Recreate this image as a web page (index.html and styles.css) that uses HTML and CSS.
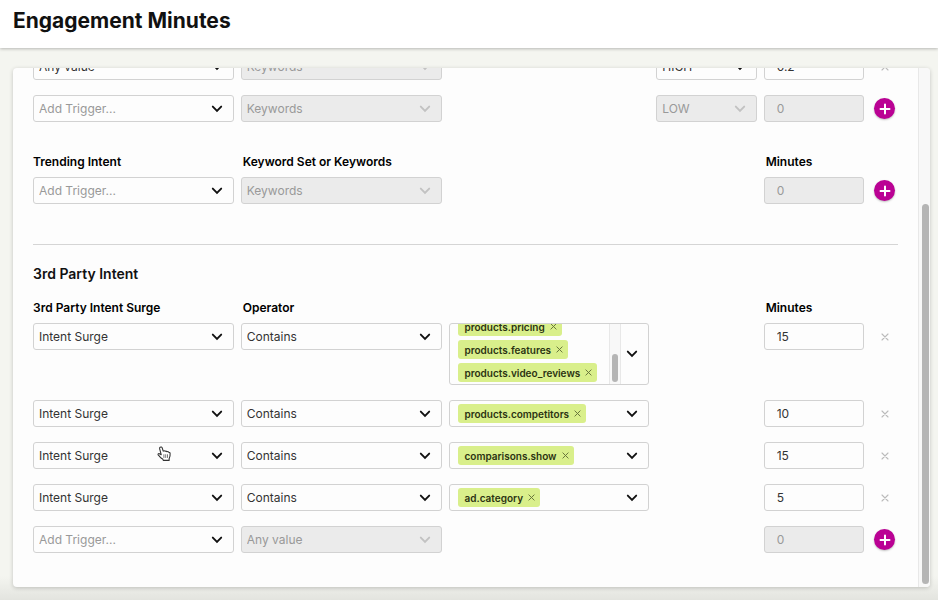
FILE: index.html
```html
<!DOCTYPE html>
<html lang="en">
<head>
<meta charset="utf-8">
<meta name="viewport" content="width=device-width, initial-scale=1">
<title>Engagement Minutes</title>
<link rel="stylesheet" href="styles.css">
</head>
<body>
<svg class="sprite" aria-hidden="true">
  <symbol id="chevron" viewBox="0 0 12 8"><path d="M1.8 1.6 6 5.8l4.200-4.200" fill="none" stroke="currentColor" stroke-width="1.900" stroke-linecap="round" stroke-linejoin="miter"/></symbol>
  <symbol id="cross" viewBox="0 0 8 8"><path d="M1 1l6 6M7 1 1 7" fill="none" stroke="currentColor" stroke-width="1.100" stroke-linecap="round"/></symbol>
  <symbol id="plus" viewBox="0 0 12 12"><path d="M6 1.500v9M1.500 6h9" fill="none" stroke="currentColor" stroke-width="2" stroke-linecap="round"/></symbol>
</svg>
<header class="page-header"><h1>Engagement Minutes</h1></header>
<main class="page">
  <div class="card">
    <form class="content">
      <section class="group">
        <div class="row">
          <div class="field"><select aria-label="Trigger"><option>Any value</option></select><svg class="chevron"><use href="#chevron"/></svg></div>
          <div class="field"><select aria-label="Keywords" disabled><option>Keywords</option></select><svg class="chevron"><use href="#chevron"/></svg></div>
          <div class="field level"><select aria-label="Level"><option>HIGH</option></select><svg class="chevron"><use href="#chevron"/></svg></div>
          <input class="minutes" type="text" aria-label="Minutes" value="0.2">
          <button class="remove" type="button" aria-label="Remove"><svg><use href="#cross"/></svg></button>
        </div>
        <div class="row">
          <div class="field"><select class="empty" aria-label="Trigger"><option>Add Trigger...</option></select><svg class="chevron"><use href="#chevron"/></svg></div>
          <div class="field"><select aria-label="Keywords" disabled><option>Keywords</option></select><svg class="chevron"><use href="#chevron"/></svg></div>
          <div class="field level"><select aria-label="Level" disabled><option>LOW</option></select><svg class="chevron"><use href="#chevron"/></svg></div>
          <input class="minutes" type="text" aria-label="Minutes" value="0" disabled>
          <button class="add" type="button" aria-label="Add"><svg><use href="#plus"/></svg></button>
        </div>
      </section>

      <section class="group trending">
        <div class="row labels">
          <label for="trend-trigger">Trending Intent</label>
          <label for="trend-keywords">Keyword Set or Keywords</label>
          <label class="minutes" for="trend-minutes">Minutes</label>
        </div>
        <div class="row">
          <div class="field"><select class="empty" id="trend-trigger"><option>Add Trigger...</option></select><svg class="chevron"><use href="#chevron"/></svg></div>
          <div class="field"><select id="trend-keywords" disabled><option>Keywords</option></select><svg class="chevron"><use href="#chevron"/></svg></div>
          <input class="minutes" id="trend-minutes" type="text" value="0" disabled>
          <button class="add" type="button" aria-label="Add"><svg><use href="#plus"/></svg></button>
        </div>
      </section>

      <hr>
      <h2>3rd Party Intent</h2>

      <section class="group">
        <div class="row labels">
          <label for="surge-1">3rd Party Intent Surge</label>
          <label for="operator-1">Operator</label>
          <label class="minutes" for="minutes-1">Minutes</label>
        </div>
        <div class="row">
          <div class="field"><select id="surge-1"><option>Intent Surge</option></select><svg class="chevron"><use href="#chevron"/></svg></div>
          <div class="field"><select id="operator-1"><option>Contains</option></select><svg class="chevron"><use href="#chevron"/></svg></div>
          <div class="field tags tall">
            <div class="tag-list">
              <span class="tag">products.pricing<button type="button" aria-label="Remove products.pricing"><svg><use href="#cross"/></svg></button></span>
              <span class="tag">products.features<button type="button" aria-label="Remove products.features"><svg><use href="#cross"/></svg></button></span>
              <span class="tag">products.video_reviews<button type="button" aria-label="Remove products.video_reviews"><svg><use href="#cross"/></svg></button></span>
            </div>
            <div class="track"><div class="thumb"></div></div>
            <svg class="chevron"><use href="#chevron"/></svg>
          </div>
          <input class="minutes" id="minutes-1" type="text" value="15">
          <button class="remove" type="button" aria-label="Remove"><svg><use href="#cross"/></svg></button>
        </div>
        <div class="row">
          <div class="field"><select aria-label="3rd Party Intent Surge"><option>Intent Surge</option></select><svg class="chevron"><use href="#chevron"/></svg></div>
          <div class="field"><select aria-label="Operator"><option>Contains</option></select><svg class="chevron"><use href="#chevron"/></svg></div>
          <div class="field tags">
            <div class="tag-list"><span class="tag">products.competitors<button type="button" aria-label="Remove products.competitors"><svg><use href="#cross"/></svg></button></span></div>
            <svg class="chevron"><use href="#chevron"/></svg>
          </div>
          <input class="minutes" type="text" aria-label="Minutes" value="10">
          <button class="remove" type="button" aria-label="Remove"><svg><use href="#cross"/></svg></button>
        </div>
        <div class="row">
          <div class="field"><select aria-label="3rd Party Intent Surge"><option>Intent Surge</option></select><svg class="chevron"><use href="#chevron"/></svg>
            <svg class="pointer" viewBox="0 0 14 16" aria-hidden="true"><path d="M3.200 1.200c.8-.5 1.700-.1 2 .7l1 3.300c.7-.6 1.500-.5 1.900.1.700-.4 1.400-.2 1.800.4.800-.3 1.500 0 1.800.6.700-.1 1.300.3 1.400 1.100.2 2.100-.1 3.700-.9 5.100l-.1 1.900H6.300L5.700 13C4 12.200 3 10.700 1.300 9.100c-.7-.8.1-1.800 1.100-1.400l1.800 1L2.600 2.700c-.1-.6.100-1.200.6-1.500z" fill="#fff" stroke="#333" stroke-width="1.100" stroke-linejoin="round"/><path d="M6.900 8.300v3.600M8.700 8.300v3.600M10.500 8.300v3.600" stroke="#555" stroke-width=".8"/></svg>
          </div>
          <div class="field"><select aria-label="Operator"><option>Contains</option></select><svg class="chevron"><use href="#chevron"/></svg></div>
          <div class="field tags">
            <div class="tag-list"><span class="tag">comparisons.show<button type="button" aria-label="Remove comparisons.show"><svg><use href="#cross"/></svg></button></span></div>
            <svg class="chevron"><use href="#chevron"/></svg>
          </div>
          <input class="minutes" type="text" aria-label="Minutes" value="15">
          <button class="remove" type="button" aria-label="Remove"><svg><use href="#cross"/></svg></button>
        </div>
        <div class="row">
          <div class="field"><select aria-label="3rd Party Intent Surge"><option>Intent Surge</option></select><svg class="chevron"><use href="#chevron"/></svg></div>
          <div class="field"><select aria-label="Operator"><option>Contains</option></select><svg class="chevron"><use href="#chevron"/></svg></div>
          <div class="field tags">
            <div class="tag-list"><span class="tag">ad.category<button type="button" aria-label="Remove ad.category"><svg><use href="#cross"/></svg></button></span></div>
            <svg class="chevron"><use href="#chevron"/></svg>
          </div>
          <input class="minutes" type="text" aria-label="Minutes" value="5">
          <button class="remove" type="button" aria-label="Remove"><svg><use href="#cross"/></svg></button>
        </div>
        <div class="row">
          <div class="field"><select class="empty" aria-label="3rd Party Intent Surge"><option>Add Trigger...</option></select><svg class="chevron"><use href="#chevron"/></svg></div>
          <div class="field"><select aria-label="Operator" disabled><option>Any value</option></select><svg class="chevron"><use href="#chevron"/></svg></div>
          <input class="minutes" type="text" aria-label="Minutes" value="0" disabled>
          <button class="add" type="button" aria-label="Add"><svg><use href="#plus"/></svg></button>
        </div>
      </section>
    </form>
    <div class="scrollbar"><div class="scroll-thumb"></div></div>
  </div>
</main>
</body>
</html>
```
FILE: styles.css
```css
* { box-sizing: border-box; }

body {
  display: flex;
  flex-direction: column;
  height: 100vh;
  margin: 0;
  overflow: hidden;
  background: #f4f5f0;
  color: #111;
  font: 12px/16px Inter, "Liberation Sans", sans-serif;
}

.sprite { position: absolute; width: 0; height: 0; }

.page-header {
  z-index: 1;
  padding: 7px 13px 13px;
  background: #fff;
  box-shadow: 0 1px 3px rgba(0, 0, 0, 0.25);
}

h1 {
  margin: 0;
  font-size: 21px;
  line-height: 28px;
  font-weight: 700;
}

.page {
  display: flex;
  flex: 1;
  min-height: 0;
  padding: 20px 8px 13px 13px;
  background: linear-gradient(to top, #e3e4df, #f4f5f0 24px);
}

.card {
  display: flex;
  flex: 1;
  min-width: 0;
  overflow: hidden;
  border-radius: 4px;
  background: #fdfdfd;
  box-shadow: 0 1px 4px rgba(0, 0, 0, 0.2);
}

.content {
  display: flex;
  flex: 1;
  flex-direction: column;
  justify-content: flex-end;
  min-width: 0;
  padding: 0 20px 34px;
}

.scrollbar {
  display: flex;
  flex-direction: column;
  justify-content: flex-end;
  width: 12px;
  padding: 3px 1px 3px 3px;
  border-left: 1px solid #e8e8e8;
  background: #f8f8f8;
}

.scroll-thumb {
  width: 7px;
  height: 74%;
  border-radius: 4px;
  background: #b5b5b5;
}

.group { display: flex; flex-direction: column; gap: 15px; }
.trending { margin-top: 32px; }

.row {
  display: grid;
  grid-template-columns: repeat(3, minmax(0, 2fr)) repeat(2, minmax(0, 1fr)) 27px;
  column-gap: 7px;
  align-items: start;
}

.labels { margin-bottom: -8px; font-weight: 600; color: #000; }
.labels label + label { padding-left: 2px; }

.level { grid-column: 4; }
.minutes { grid-column: 5; }
.add, .remove { grid-column: 6; }

hr {
  width: 100%;
  margin: 40px 0 19px;
  border: 0;
  border-top: 1px solid #d5d5d5;
}

h2 {
  margin: 0 0 16px;
  font-size: 14px;
  line-height: 20px;
  font-weight: 600;
}

.field { position: relative; min-width: 0; }

select, input, .tags {
  width: 100%;
  height: 27px;
  border: 1px solid #d2d2d2;
  border-radius: 3px;
  background: #fdfdfd;
  color: #333;
  font: inherit;
}

select { display: block; padding: 0 28px 0 5px; appearance: none; }
input { padding: 0 12px; }

select.empty { color: #999; }
select:disabled, input:disabled { background: #ebebeb; color: #999; opacity: 1; }

.chevron {
  position: absolute;
  top: 50%;
  right: 11px;
  width: 12px;
  height: 8px;
  margin-top: -4px;
  color: #111;
  pointer-events: none;
}
select:disabled + .chevron { color: #c2c2c2; }
.tags .chevron { right: 10px; }

.tags { display: flex; padding-right: 27px; }
.tags.tall { height: 62px; }

.tag-list {
  display: flex;
  flex: 1;
  flex-direction: column;
  align-items: flex-start;
  justify-content: flex-end;
  gap: 4px;
  overflow: hidden;
  padding: 0 8px 3px;
}
.tall .tag-list { padding-bottom: 2px; }

.tag {
  display: flex;
  flex-shrink: 0;
  align-items: center;
  gap: 5px;
  height: 19px;
  padding: 0 5px 0 7px;
  border-radius: 3px;
  background: #d9ef8b;
  color: #2b3312;
  font-size: 10px;
  font-weight: 600;
}

.track {
  display: flex;
  align-items: flex-end;
  width: 12px;
  padding: 2px;
  border: solid #e8e8e8;
  border-width: 0 1px;
  background: #f8f8f8;
}
.thumb { width: 7px; height: 28px; border-radius: 4px; background: #b5b5b5; }

button {
  display: flex;
  align-items: center;
  justify-content: center;
  padding: 0;
  border: 0;
  background: none;
  cursor: pointer;
}

.tag button { color: #66733a; }
.tag svg { width: 7px; height: 7px; }

.remove { height: 27px; color: #bbb; }
.remove svg { width: 8px; height: 8px; }

.add {
  align-self: center;
  justify-self: center;
  width: 21px;
  height: 21px;
  border-radius: 50%;
  background: #ba0294;
  color: #fff;
  box-shadow: 0 1px 2px rgba(0, 0, 0, 0.25);
}
.add svg { width: 12px; height: 12px; }

.pointer {
  position: absolute;
  top: 4px;
  left: 62%;
  width: 14px;
  height: 16px;
  pointer-events: none;
}
```
